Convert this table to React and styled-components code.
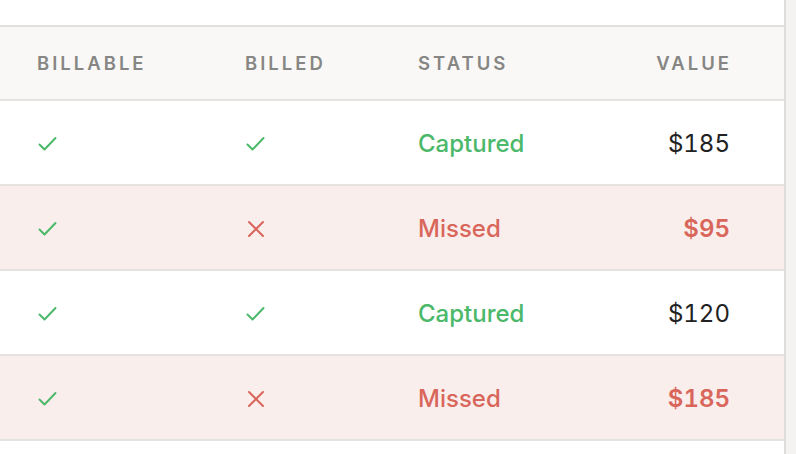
import React from "react";
import styled, { createGlobalStyle } from "styled-components";

const Global = createGlobalStyle`
  html, body { margin: 0; padding: 0; background: #f4f3f1; }
  body { font-family: Inter, "Noto Sans", sans-serif; -webkit-font-smoothing: antialiased; }
`;

const Panel = styled.div`
  width: 786px;
  background: #ffffff;
  border-right: 2px solid #dfddda;
  min-height: 454px;
  box-sizing: border-box;
`;

const TopGap = styled.div`
  height: 25px;
  background: #ffffff;
`;

const Table = styled.div`
  display: flex;
  flex-direction: column;
  border-top: 2px solid #e2e0dd;
`;

const Row = styled.div`
  display: grid;
  grid-template-columns: 208px 173px 1fr auto;
  align-items: center;
  padding: ${(p) => (p.$header ? "0 54px 0 37px" : "2px 54px 0 37px")};
  height: ${(p) => (p.$header ? "72px" : "81px")};
  background: ${(p) => (p.$header ? "#f9f8f6" : p.$missed ? "#faeeec" : "#ffffff")};
  border-bottom: 2px solid #e5e2df;
`;

const HeadCell = styled.div`
  font-size: 18.5px;
  font-weight: 600;
  letter-spacing: 3px;
  color: #868684;
  text-align: ${(p) => (p.$right ? "right" : "left")};
  margin-right: ${(p) => (p.$right ? "-2px" : "0")};
`;

const Cell = styled.div`
  display: flex;
  align-items: center;
  justify-content: ${(p) => (p.$right ? "flex-end" : "flex-start")};
`;

const Status = styled.span`
  font-size: 24px;
  font-weight: 500;
  color: ${(p) => (p.$missed ? "#d9665b" : "#4cb86a")};
`;

const Value = styled.span`
  font-size: 24px;
  font-variant-numeric: tabular-nums;
  font-weight: ${(p) => (p.$missed ? 600 : 400)};
  color: ${(p) => (p.$missed ? "#d9665b" : "#222222")};
`;

const Check = () => (
  <svg width="20" height="16" viewBox="0 0 20 16" fill="none" style={{ marginLeft: 1 }}>
    <path d="M1.5 8.5 L6.5 13.5 L17.5 2" stroke="#4cb86a" strokeWidth="2" strokeLinecap="round" strokeLinejoin="round" />
  </svg>
);

const Cross = () => (
  <svg width="18" height="18" viewBox="0 0 18 18" fill="none" style={{ marginLeft: 2 }}>
    <path d="M2 2 L16 16 M16 2 L2 16" stroke="#d9665b" strokeWidth="2" strokeLinecap="round" />
  </svg>
);

const rows = [
  { billable: true, billed: true, value: "$185" },
  { billable: true, billed: false, value: "$95" },
  { billable: true, billed: true, value: "$120" },
  { billable: true, billed: false, value: "$185" },
];

export default function App() {
  return (
    <>
      <Global />
      <Panel>
        <TopGap />
        <Table>
          <Row $header>
            <HeadCell>BILLABLE</HeadCell>
            <HeadCell>BILLED</HeadCell>
            <HeadCell>STATUS</HeadCell>
            <HeadCell $right>VALUE</HeadCell>
          </Row>
          {rows.map((r, i) => {
            const missed = !r.billed;
            return (
              <Row key={i} $missed={missed}>
                <Cell>{r.billable ? <Check /> : <Cross />}</Cell>
                <Cell>{r.billed ? <Check /> : <Cross />}</Cell>
                <Cell>
                  <Status $missed={missed}>{missed ? "Missed" : "Captured"}</Status>
                </Cell>
                <Cell $right>
                  <Value $missed={missed}>{r.value}</Value>
                </Cell>
              </Row>
            );
          })}
        </Table>
      </Panel>
    </>
  );
}
